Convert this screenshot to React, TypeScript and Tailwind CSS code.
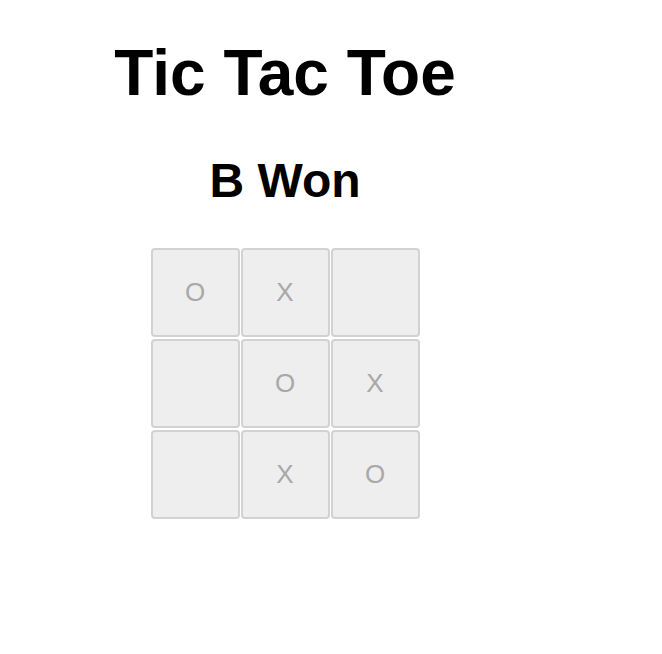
const board = ["O", "X", "", "", "O", "X", "", "X", "O"];

export default function App() {
  return (
    <div className="w-[570px] pt-[41px] flex flex-col items-center font-['Liberation_Sans',Arial,sans-serif] text-black">
      {/* title */}
      <h1 className="text-[64px] leading-[64px] font-bold">Tic Tac Toe</h1>
      {/* status */}
      <h2 className="mt-[52px] text-[48px] leading-[48px] font-bold">B Won</h2>
      {/* board */}
      <div className="mt-[43px] grid grid-cols-[repeat(3,89px)] gap-x-[1px] gap-y-[2px]">
        {board.map((v, i) => (
          <button
            key={i}
            className="w-[89px] h-[89px] bg-[#eeeeee] border-2 border-[#d2d2d2] rounded-[4px] text-[26px] text-[#a8a8a8] flex items-center justify-center"
          >
            {v}
          </button>
        ))}
      </div>
    </div>
  );
}
